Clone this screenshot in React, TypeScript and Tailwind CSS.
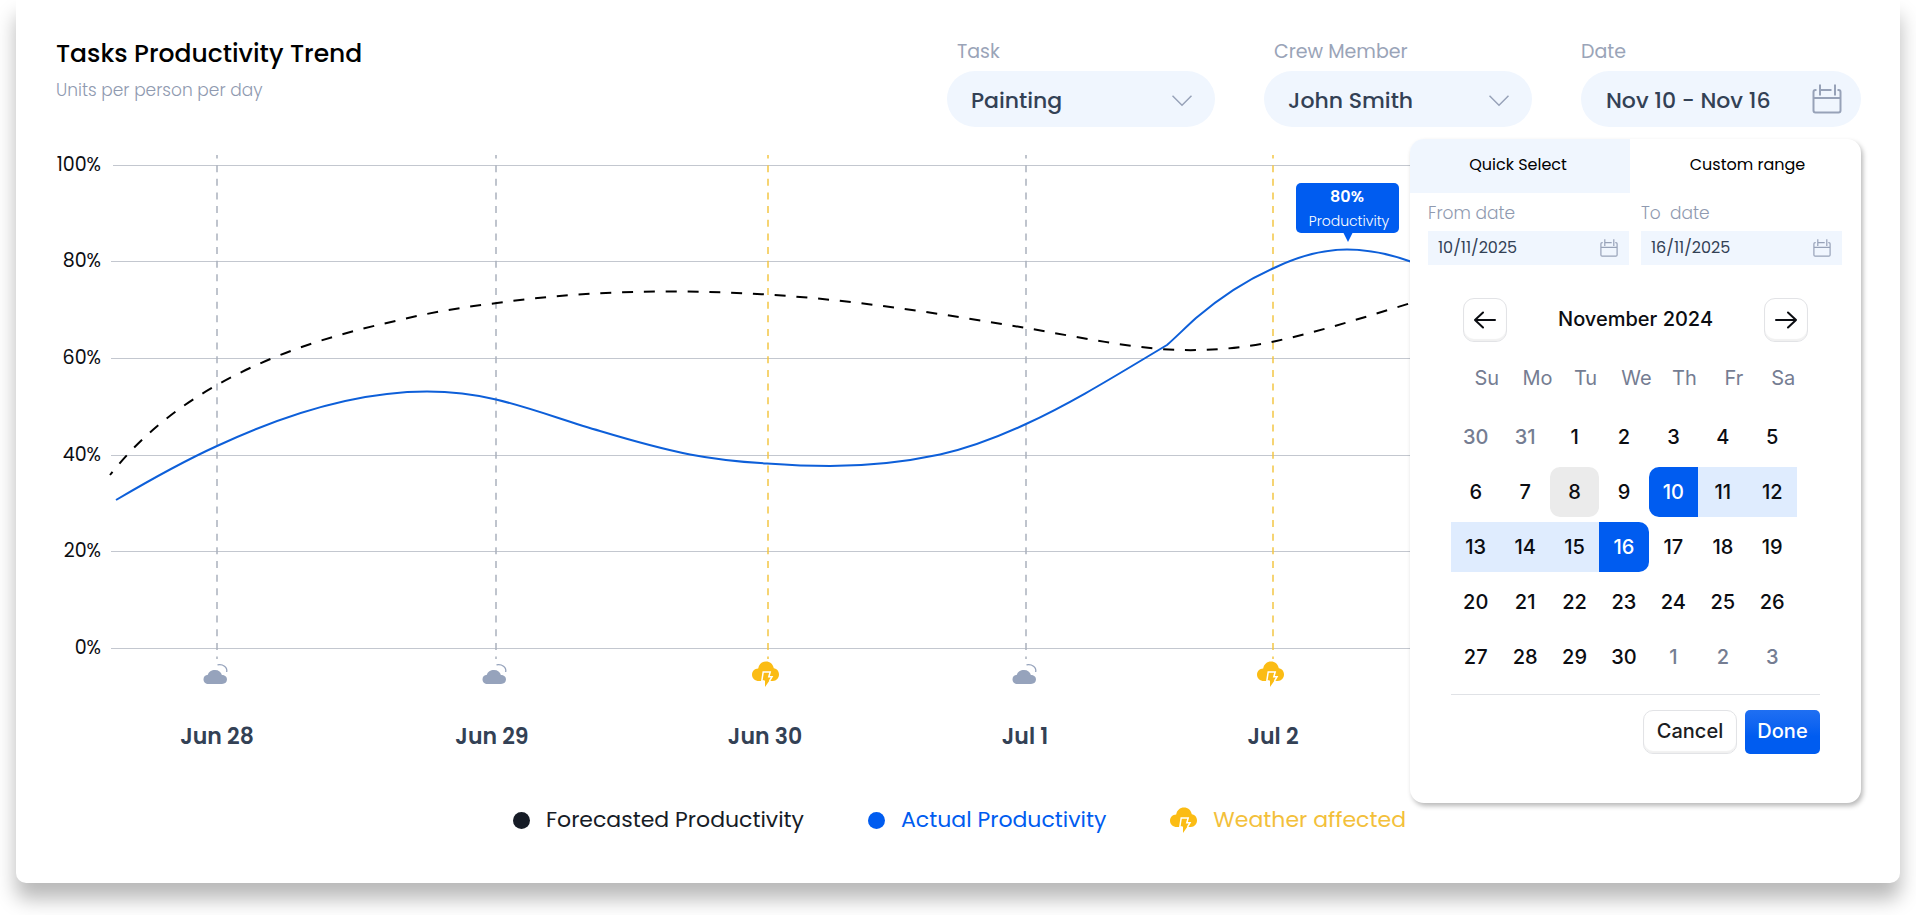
import React, { useState } from 'react';

interface WeatherDay {
  label: string;
  x: number;
  labelX: number;
  iconX: number;
  storm: boolean;
}

interface CalendarDay {
  day: number;
  outside?: boolean;
}

const gridRows = [
  { label: '100%', y: 165, start: 113 },
  { label: '80%', y: 261, start: 111 },
  { label: '60%', y: 358, start: 111 },
  { label: '40%', y: 455, start: 111 },
  { label: '20%', y: 551, start: 111 },
  { label: '0%', y: 648, start: 111 },
];

const weatherDays: WeatherDay[] = [
  { label: 'Jun 28', x: 217, labelX: 217, iconX: 203, storm: false },
  { label: 'Jun 29', x: 496, labelX: 492, iconX: 482, storm: false },
  { label: 'Jun 30', x: 768, labelX: 765, iconX: 752, storm: true },
  { label: 'Jul 1', x: 1026, labelX: 1025, iconX: 1012, storm: false },
  { label: 'Jul 2', x: 1273, labelX: 1273, iconX: 1257, storm: true },
];

const weekDays = ['Su', 'Mo', 'Tu', 'We', 'Th', 'Fr', 'Sa'];

const weeks: CalendarDay[][] = [
  [{ day: 30, outside: true }, { day: 31, outside: true }, { day: 1 }, { day: 2 }, { day: 3 }, { day: 4 }, { day: 5 }],
  [6, 7, 8, 9, 10, 11, 12].map((day) => ({ day })),
  [13, 14, 15, 16, 17, 18, 19].map((day) => ({ day })),
  [20, 21, 22, 23, 24, 25, 26].map((day) => ({ day })),
  [{ day: 27 }, { day: 28 }, { day: 29 }, { day: 30 }, { day: 1, outside: true }, { day: 2, outside: true }, { day: 3, outside: true }],
];

const dayClass = ({ day, outside }: CalendarDay) => {
  if (outside) return 'text-[#757d92]';
  if (day === 10) return 'bg-[#005cf0] text-white rounded-l-[10px]';
  if (day === 16) return 'bg-[#005cf0] text-white rounded-r-[10px]';
  if (day > 10 && day < 16) return 'bg-[#dfecfe] text-[#0b0d12]';
  if (day === 8) return 'bg-[#ebebeb] text-[#0b0d12] rounded-[10px]';
  return 'text-[#0b0d12]';
};

const CalendarIcon: React.FC<{ className: string }> = ({ className }) => (
  <svg className={className} viewBox="0 0 30 30" fill="none" stroke="#97a2b8" strokeWidth="2" aria-hidden="true">
    <path d="M4.500 6H3.500A2 2 0 0 0 1.500 8V26.500A2 2 0 0 0 3.500 28.500H26.500A2 2 0 0 0 28.500 26.500V8A2 2 0 0 0 26.500 6H25.500M8 6H19.500M1.500 14H28.500M8 .5V11.500M23 .5V11.500" />
  </svg>
);

const CloudIcon: React.FC<{ x: number; y: number }> = ({ x, y }) => (
  <g transform={`translate(${x} ${y})`}>
    <path d="M5.600 20C2.500 20 .5 18 .5 15.200C.5 12.600 2.400 11 4.900 10.800C5.600 7.800 8.500 5.900 12 5.900C15.600 5.900 18.200 7.900 18.900 10.900C21.800 10.900 24 12.500 24 15.300C24 18.100 22 20 19 20Z" fill="#96a3bc" />
    <path d="M14.500 .9C20 -.2 24.600 3.200 23.700 8" fill="none" stroke="#96a3bc" strokeWidth="1.300" />
  </g>
);

const StormShape: React.FC = () => (
  <>
    <path d="M7 20C3 20 0 17.300 0 13.700C0 10.200 2.700 7.600 6.200 7.500C6.900 3.200 10 .5 14 .5C18 .5 21 3.200 21.800 7.300C25 7.600 27 10.300 27 13.600C27 17.200 24.500 20 20.800 20Z" fill="#fbbc14" />
    <path d="M11.300 11H18.300L17 15.500H20.300L13 26V19.500H10.200Z" fill="#fbbc14" />
    <path d="M12.600 20H9.800L11.200 11H18.200L16.800 15.800H20L17.500 20" fill="none" stroke="#fff" strokeWidth="1.500" />
  </>
);

const ProductivityChart: React.FC = () => (
  <svg
    className="block w-full h-auto font-[Poppins,Inter,sans-serif]"
    viewBox="56 127 1805 633"
    role="img"
    aria-label="Forecasted and actual productivity by day"
  >
    {gridRows.map((row) => (
      <g key={row.label}>
        <text x="101" y={row.y + 6} textAnchor="end" fontSize="19" fill="#0b0d12">{row.label}</text>
        <path d={`M${row.start} ${row.y + 0.5}H1861`} stroke="#c3c7cf" />
      </g>
    ))}

    {weatherDays.map((d) => (
      <g key={d.label}>
        <path
          d={`M${d.x} 155V659`}
          stroke={d.storm ? '#f3c644' : '#abb1bd'}
          strokeWidth="1.500"
          strokeDasharray="7 6.650"
          strokeDashoffset="3.500"
        />
        {d.storm ? (
          <g transform={`translate(${d.iconX} 661)`}><StormShape /></g>
        ) : (
          <CloudIcon x={d.iconX} y={664} />
        )}
        <text x={d.labelX} y="744" textAnchor="middle" fontSize="22" fontWeight="600" fill="#334155">{d.label}</text>
      </g>
    ))}

    {/* forecasted */}
    <path
      d="M110 475C140 437 176 408 217 385C270 355 330 335 400 320C432 312 464 307 497 303C553 295 611 291.500 670 291.500C703 291.500 735 292.500 767 294.500C855 300 942 314 1026 328C1070 335.500 1115 345 1160 349C1200 352 1238 349 1274 341.500C1320 331.500 1365 317 1411 303"
      fill="none"
      stroke="#000"
      strokeWidth="2"
      strokeDasharray="11 10.800"
      strokeDashoffset="7"
    />
    {/* actual */}
    <path
      d="M116 500C150 480 184 461 217 446C290 412 360 391.500 427 391.500C450 391.500 473 394 496 399.500C530 407.500 565 421 600 431C630 440 660 448.500 690 454.500C716 459.500 740 462 767 463.500C788 465 810 466 830 466C866 466 900 463 940 454.500C969 448 998 437 1026 424C1074 402 1120 373 1167 345C1175 338 1186 327 1196 318C1223 295 1249 279 1274 268C1299 256 1322 249.500 1347 249.500C1370 249.500 1390 254 1412 262"
      fill="none"
      stroke="#0d5fd9"
      strokeWidth="2"
    />

    <rect x="1296" y="183" width="103" height="50" rx="5" fill="#005cf0" />
    <path d="M1343 232H1353L1348 242Z" fill="#005cf0" />
    <text x="1347" y="202" textAnchor="middle" fontSize="16" fontWeight="600" fill="#fff">80%</text>
    <text x="1349" y="226" textAnchor="middle" fontSize="14" fontWeight="300" fill="#fff">Productivity</text>
  </svg>
);

interface SelectFieldProps {
  id: string;
  label: string;
  options: string[];
}

const SelectField: React.FC<SelectFieldProps> = ({ id, label, options }) => (
  <div>
    <label htmlFor={id} className="block pl-[10px] mb-[5px] text-[19px] leading-7 text-[#9aa4b8]">{label}</label>
    <div className="relative">
      <select
        id={id}
        className="appearance-none w-[268px] h-14 pl-6 pr-12 pt-[2px] rounded-full bg-[#f0f6fe] text-[22px] font-medium text-[#334155] outline-none"
      >
        {options.map((o) => (
          <option key={o}>{o}</option>
        ))}
      </select>
      <svg className="absolute right-[23px] top-6 w-5 h-3 pointer-events-none" viewBox="0 0 20 12" fill="none" stroke="#97a2b8" strokeWidth="1.500" aria-hidden="true">
        <path d="M.5 .8L10 10.200L19.500 .8" />
      </svg>
    </div>
  </div>
);

interface DateInputProps {
  id: string;
  label: string;
  value: string;
}

const DateInput: React.FC<DateInputProps> = ({ id, label, value }) => (
  <div className="flex-1 min-w-0">
    <label htmlFor={id} className="block mb-[6px] text-[17px] leading-6 font-light text-[#8f9ab0] whitespace-pre">{label}</label>
    <div className="flex items-center h-[34px] pl-[10px] pr-[11px] bg-[#f0f6fe]">
      <input id={id} type="text" defaultValue={value} className="flex-1 min-w-0 bg-transparent text-[16px] text-[#334155] outline-none" />
      <CalendarIcon className="shrink-0 w-[18px] h-[18px]" />
    </div>
  </div>
);

const ArrowIcon: React.FC<{ flip?: boolean }> = ({ flip }) => (
  <svg className={flip ? 'w-[22px] h-[18px] rotate-180' : 'w-[22px] h-[18px]'} viewBox="0 0 22 18" fill="none" stroke="#0b0d12" strokeWidth="2" strokeLinecap="round" strokeLinejoin="round" aria-hidden="true">
    <path d="M21 9H1M9 1.500L1 9L9 16.500" />
  </svg>
);

const navButton =
  'flex items-center justify-center w-[44px] h-[44px] rounded-[11px] border border-[#e2e3e6] bg-white shadow-[inset_0_-2px_1px_rgba(0,0,0,0.06)]';

const DateRangePopup: React.FC = () => (
  <div className="absolute right-0 top-full mt-3 z-10 w-[451px] pb-[49px] rounded-[14px] bg-white overflow-hidden shadow-[2px_3px_5px_rgba(0,0,0,0.28)]">
    <div className="flex h-[54px] text-[16px] text-black" role="tablist">
      <button type="button" role="tab" aria-selected="false" className="w-[220px] bg-[#f0f6fe] pr-1 pb-[2px]">Quick Select</button>
      <button type="button" role="tab" aria-selected="true" className="flex-1 pl-1 pb-[2px]">Custom range</button>
    </div>

    <div className="flex gap-3 pl-[18px] pr-[19px] pt-2">
      <DateInput id="from-date" label="From date" value="10/11/2025" />
      <DateInput id="to-date" label="To  date" value="16/11/2025" />
    </div>

    <div className="px-[41px] font-[Inter,sans-serif] text-[20px] font-medium">
      <div className="flex items-center justify-between mt-[33px] px-3">
        <button type="button" aria-label="Previous month" className={navButton}><ArrowIcon /></button>
        <span className="pb-[2px] text-[#0b0d12]">November 2024</span>
        <button type="button" aria-label="Next month" className={navButton}><ArrowIcon flip /></button>
      </div>

      <table className="w-[346px] mt-[2px] table-fixed border-separate border-spacing-x-0 border-spacing-y-[5px]">
        <thead>
          <tr>
            {weekDays.map((d) => (
              <th key={d} className="h-[58px] p-0 pl-[22px] font-normal text-[#757d92]">{d}</th>
            ))}
          </tr>
        </thead>
        <tbody>
          {weeks.map((week, i) => (
            <tr key={i}>
              {week.map((d) => (
                <td key={d.day} className="p-0">
                  <button type="button" className={`block w-full h-[50px] ${dayClass(d)}`}>{d.day}</button>
                </td>
              ))}
            </tr>
          ))}
        </tbody>
      </table>

      <div className="mt-[7px] border-t border-[#e0e2e6]" />

      <div className="flex justify-end gap-2 mt-[15px]">
        <button type="button" className="w-[94px] h-[44px] pb-[2px] rounded-[10px] border border-[#e2e3e6] text-[#1b1d22] shadow-[inset_0_-2px_1px_rgba(0,0,0,0.06)]">
          Cancel
        </button>
        <button type="button" className="w-[75px] h-[44px] pb-[2px] rounded-[5px] text-white bg-linear-to-b from-[#1f6ff2] to-[#005cf0] to-60%">
          Done
        </button>
      </div>
    </div>
  </div>
);

const App: React.FC = () => {
  const [open, setOpen] = useState(true);

  return (
    <div className="pb-8 bg-white font-[Poppins,Inter,sans-serif]">
      <div className="mx-4 pl-10 pr-[39px] pb-[47px] rounded-b-[10px] bg-white shadow-[0_16px_20px_rgba(0,0,0,0.28)]">
        <div className="flex items-start justify-between pt-[38px]">
          <div>
            <h1 className="text-[25px] leading-8 font-medium text-black">Tasks Productivity Trend</h1>
            <p className="mt-2 text-[17px] leading-6 font-light text-[#8f9ab0]">Units per person per day</p>
          </div>

          <div className="flex gap-[49px]">
            <SelectField id="task" label="Task" options={['Painting', 'Drywall', 'Framing']} />
            <SelectField id="crew" label="Crew Member" options={['John Smith']} />
            <div className="relative">
              <label htmlFor="date" className="block mb-[5px] text-[19px] leading-7 text-[#9aa4b8]">Date</label>
              <button
                id="date"
                type="button"
                onClick={() => setOpen(!open)}
                className="flex items-center justify-between w-[280px] h-14 pl-[25px] pr-[19px] rounded-full bg-[#f0f6fe] text-[22px] font-medium text-[#334155]"
              >
                <span className="pt-[2px]">Nov 10 - Nov 16</span>
                <CalendarIcon className="w-[30px] h-[30px]" />
              </button>
              {open && <DateRangePopup />}
            </div>
          </div>
        </div>

        <ProductivityChart />

        <div className="flex items-center justify-center gap-16 mt-11 pl-[2px] text-[22px] leading-8">
          <div className="flex items-center gap-4 text-[#161c26]">
            <span className="w-[17px] h-[17px] rounded-full bg-[#161c26]" />
            Forecasted Productivity
          </div>
          <div className="flex items-center gap-4 text-[#005cf0]">
            <span className="w-[17px] h-[17px] rounded-full bg-[#005cf0]" />
            Actual Productivity
          </div>
          <div className="flex items-center gap-4 text-[#f3c03a]">
            <svg className="w-[27px] h-[27px]" viewBox="0 0 27 27" aria-hidden="true"><StormShape /></svg>
            Weather affected
          </div>
        </div>
      </div>
    </div>
  );
};

export default App;
